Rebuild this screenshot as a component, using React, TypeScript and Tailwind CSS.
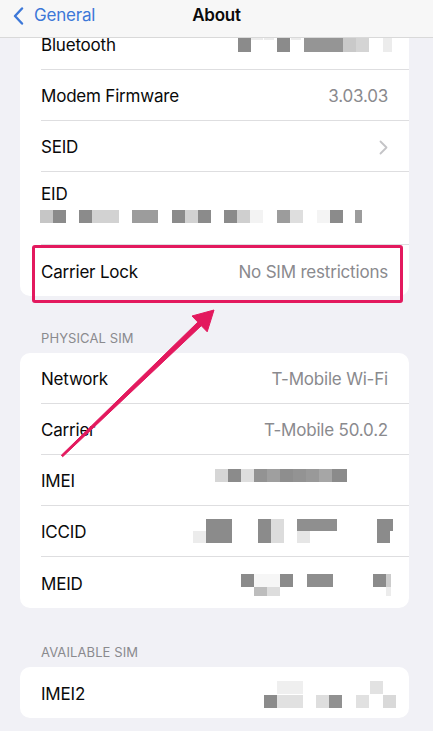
import { ReactNode } from "react";

type Block = [number, number, number, number, string];

// pixelated (censored) values, drawn in page coords, shifted by the row origin
const Pix = ({ blocks, x0, y0, w, h }: { blocks: Block[], x0: number, y0: number, w: number, h: number }) => (
    <svg width={w} height={h} viewBox={`0 0 ${w} ${h}`} className="shrink-0 block">
        {blocks.map((b, i) => (
            <rect key={i} x={b[0] - x0} y={b[1] - y0} width={b[2]} height={b[3]} fill={b[4]} />
        ))}
    </svg>
);

const D = "#8b8b8b";
const M = "#9c9c9c";
const L = "#d2d2d2";
const F = "#ececec";

const bluetooth: Block[] = [
    [238, 38, 13, 14, D], [251, 36, 12, 4, F], [264, 36, 10, 4, F],
    [277, 38, 13, 14, D], [291, 36, 10, 4, F],
    [304, 38, 39, 14, "#959595"], [343, 38, 13, 14, "#c9c9c9"], [356, 38, 13, 14, "#d4d4d4"],
    [383, 38, 9, 14, F],
];

const eid: Block[] = [
    [40, 210, 13, 13, "#c6c6c6"], [53, 210, 13, 13, D],
    [79, 210, 13, 13, D], [92, 210, 27, 13, L],
    [132, 210, 26, 13, M],
    [172, 210, 13, 13, D], [185, 210, 13, 13, L], [198, 210, 13, 13, D],
    [224, 210, 13, 13, D], [237, 210, 13, 13, "#cfcfcf"], [250, 210, 13, 13, "#f3f3f3"],
    [277, 210, 13, 13, M], [290, 210, 13, 13, "#dedede"],
    [317, 210, 13, 13, "#f4f4f4"], [330, 210, 13, 13, D],
    [355, 210, 7, 13, M],
];

const imei: Block[] = [
    [215, 469, 13, 13, "#d6d6d6"], [228, 469, 13, 13, D], [241, 469, 13, 13, "#dedede"],
    [254, 469, 13, 13, "#939393"], [267, 469, 13, 13, "#9f9f9f"], [280, 469, 13, 13, "#8e8e8e"],
    [293, 469, 13, 13, "#939393"], [306, 469, 13, 13, "#999999"], [319, 469, 13, 13, "#a6a6a6"],
    [332, 469, 15, 13, D],
];

const iccid: Block[] = [
    [193, 531, 13, 12, F],
    [206, 519, 26, 24, D],
    [258, 519, 13, 24, D], [271, 519, 13, 24, "#dcdcdc"],
    [297, 519, 40, 12, "#8f8f8f"], [297, 531, 13, 12, "#e6e6e6"],
    [377, 519, 16, 12, D], [377, 531, 13, 12, D],
];

const meid: Block[] = [
    [241, 573, 13, 13, D], [254, 573, 26, 13, "#f6f6f6"], [280, 573, 13, 13, D],
    [307, 573, 26, 13, "#8e8e8e"],
    [373, 573, 13, 13, D], [386, 573, 5, 13, "#cccccc"],
    [254, 586, 13, 9, "#bdbdbd"], [267, 586, 13, 9, "#dddddd"], [386, 586, 5, 9, F],
];

const imei2: Block[] = [
    [277, 680, 26, 13, "#efefef"], [370, 680, 13, 13, "#e2e2e2"],
    [264, 694, 13, 13, D], [277, 694, 26, 13, "#e1e1e1"],
    [316, 694, 13, 13, "#dedede"], [329, 694, 13, 13, "#919191"],
    [356, 694, 13, 13, "#e1e1e1"], [383, 694, 13, 13, "#d9d9d9"],
];

const Row = ({ label, children, last }: { label: string, children?: ReactNode, last?: boolean }) => (
    <div className="h-[51px] pl-[21px]">
        <div className={`h-full flex items-center justify-between pr-[21px] ${last ? "" : "border-b border-[#dedee0]"}`}>
            <span className="text-[17px] text-[#0a0a0a] tracking-[-0.2px] translate-y-[2px]">{label}</span>
            {children}
        </div>
    </div>
);

const Value = ({ children }: { children: ReactNode }) => (
    <span className="text-[17px] text-[#8a8a8e] tracking-[-0.2px] translate-y-[2px]">{children}</span>
);

const PixRow = ({ label, blocks, top, last }: { label: string, blocks: Block[], top: number, last?: boolean }) => (
    <Row label={label} last={last}>
        <div className="-mr-[12px]">
            <Pix blocks={blocks} x0={180} y0={top} w={220} h={50} />
        </div>
    </Row>
);

const Header = ({ title, h }: { title: string, h: string }) => (
    <div className={`${h} flex items-end pl-[41px] pb-[7px]`}>
        <span className="text-[13px] leading-[16px] text-[#8a8a8e] uppercase tracking-[0.1px]">{title}</span>
    </div>
);

const App = () => {
    return (
        <div className="relative w-[433px] h-[731px] overflow-hidden bg-[#f1f1f6]" style={{ fontFamily: "Inter, 'Noto Sans', sans-serif" }}>

            <div className="pt-[19px] pl-[20px] pr-[24px]">
                <div className="bg-white rounded-[10px]">
                    <PixRow label="Bluetooth" blocks={bluetooth} top={19} />
                    <Row label="Modem Firmware"><Value>3.03.03</Value></Row>
                    <Row label="SEID">
                        <svg width="9" height="15" viewBox="0 0 9 15" className="translate-y-[1px]">
                            <path d="M1.5 1.5 L7.5 7.5 L1.5 13.5" fill="none" stroke="#c4c4c7" strokeWidth="1.8" strokeLinecap="round" strokeLinejoin="round" />
                        </svg>
                    </Row>
                    <div className="h-[73px] pl-[21px]">
                        <div className="h-full flex flex-col pt-[12px] border-b border-[#dedee0]">
                            <span className="text-[17px] leading-[20px] text-[#0a0a0a] tracking-[-0.2px]">EID</span>
                            <div className="mt-[6px] -ml-[1px]">
                                <Pix blocks={eid} x0={40} y0={210} w={330} h={13} />
                            </div>
                        </div>
                    </div>
                    <Row label="Carrier Lock" last><Value>No SIM restrictions</Value></Row>
                </div>

                <Header title="Physical SIM" h="h-[57px] -ml-[20px]" />
                <div className="bg-white rounded-[10px]">
                    <Row label="Network"><Value>T-Mobile Wi-Fi</Value></Row>
                    <Row label="Carrier"><Value>T-Mobile 50.0.2</Value></Row>
                    <PixRow label="IMEI" blocks={imei} top={455} />
                    <PixRow label="ICCID" blocks={iccid} top={506} />
                    <PixRow label="MEID" blocks={meid} top={557} last />
                </div>

                <Header title="Available SIM" h="h-[59px] -ml-[20px]" />
                <div className="bg-white rounded-[10px]">
                    <PixRow label="IMEI2" blocks={imei2} top={667} last />
                </div>
            </div>

            {/* nav bar */}
            <div className="absolute top-0 left-0 right-0 h-[38px] bg-[#f7f7f7] border-b border-[#d9d9d9] flex items-start pt-[3px]">
                <div className="flex items-center pl-[13px] gap-[10px] text-[#3d78d8]">
                    <svg width="11" height="18" viewBox="0 0 11 18">
                        <path d="M9 1.5 L2 9 L9 16.5" fill="none" stroke="#3d78d8" strokeWidth="2.4" strokeLinecap="round" strokeLinejoin="round" />
                    </svg>
                    <span className="text-[17px] tracking-[-0.2px]">General</span>
                </div>
                <span className="absolute left-1/2 -translate-x-1/2 text-[17px] font-semibold text-[#0a0a0a] tracking-[-0.2px]">About</span>
            </div>

            {/* highlight box */}
            <div className="absolute left-[32px] top-[245px] w-[371px] h-[58px] border-[3.5px] border-[#e3195e] rounded-[3px]" />

            {/* arrow */}
            <svg className="absolute left-0 top-0" width="433" height="731" viewBox="0 0 433 731">
                <polygon
                    points="61.3,455.3 197.9,322.1 192,316 214,310 207.2,331.8 201.3,325.7 62.7,456.7"
                    fill="#e3195e"
                    stroke="#e3195e"
                    strokeWidth="1"
                    strokeLinejoin="round"
                />
            </svg>
        </div>
    );
};

export default App;
